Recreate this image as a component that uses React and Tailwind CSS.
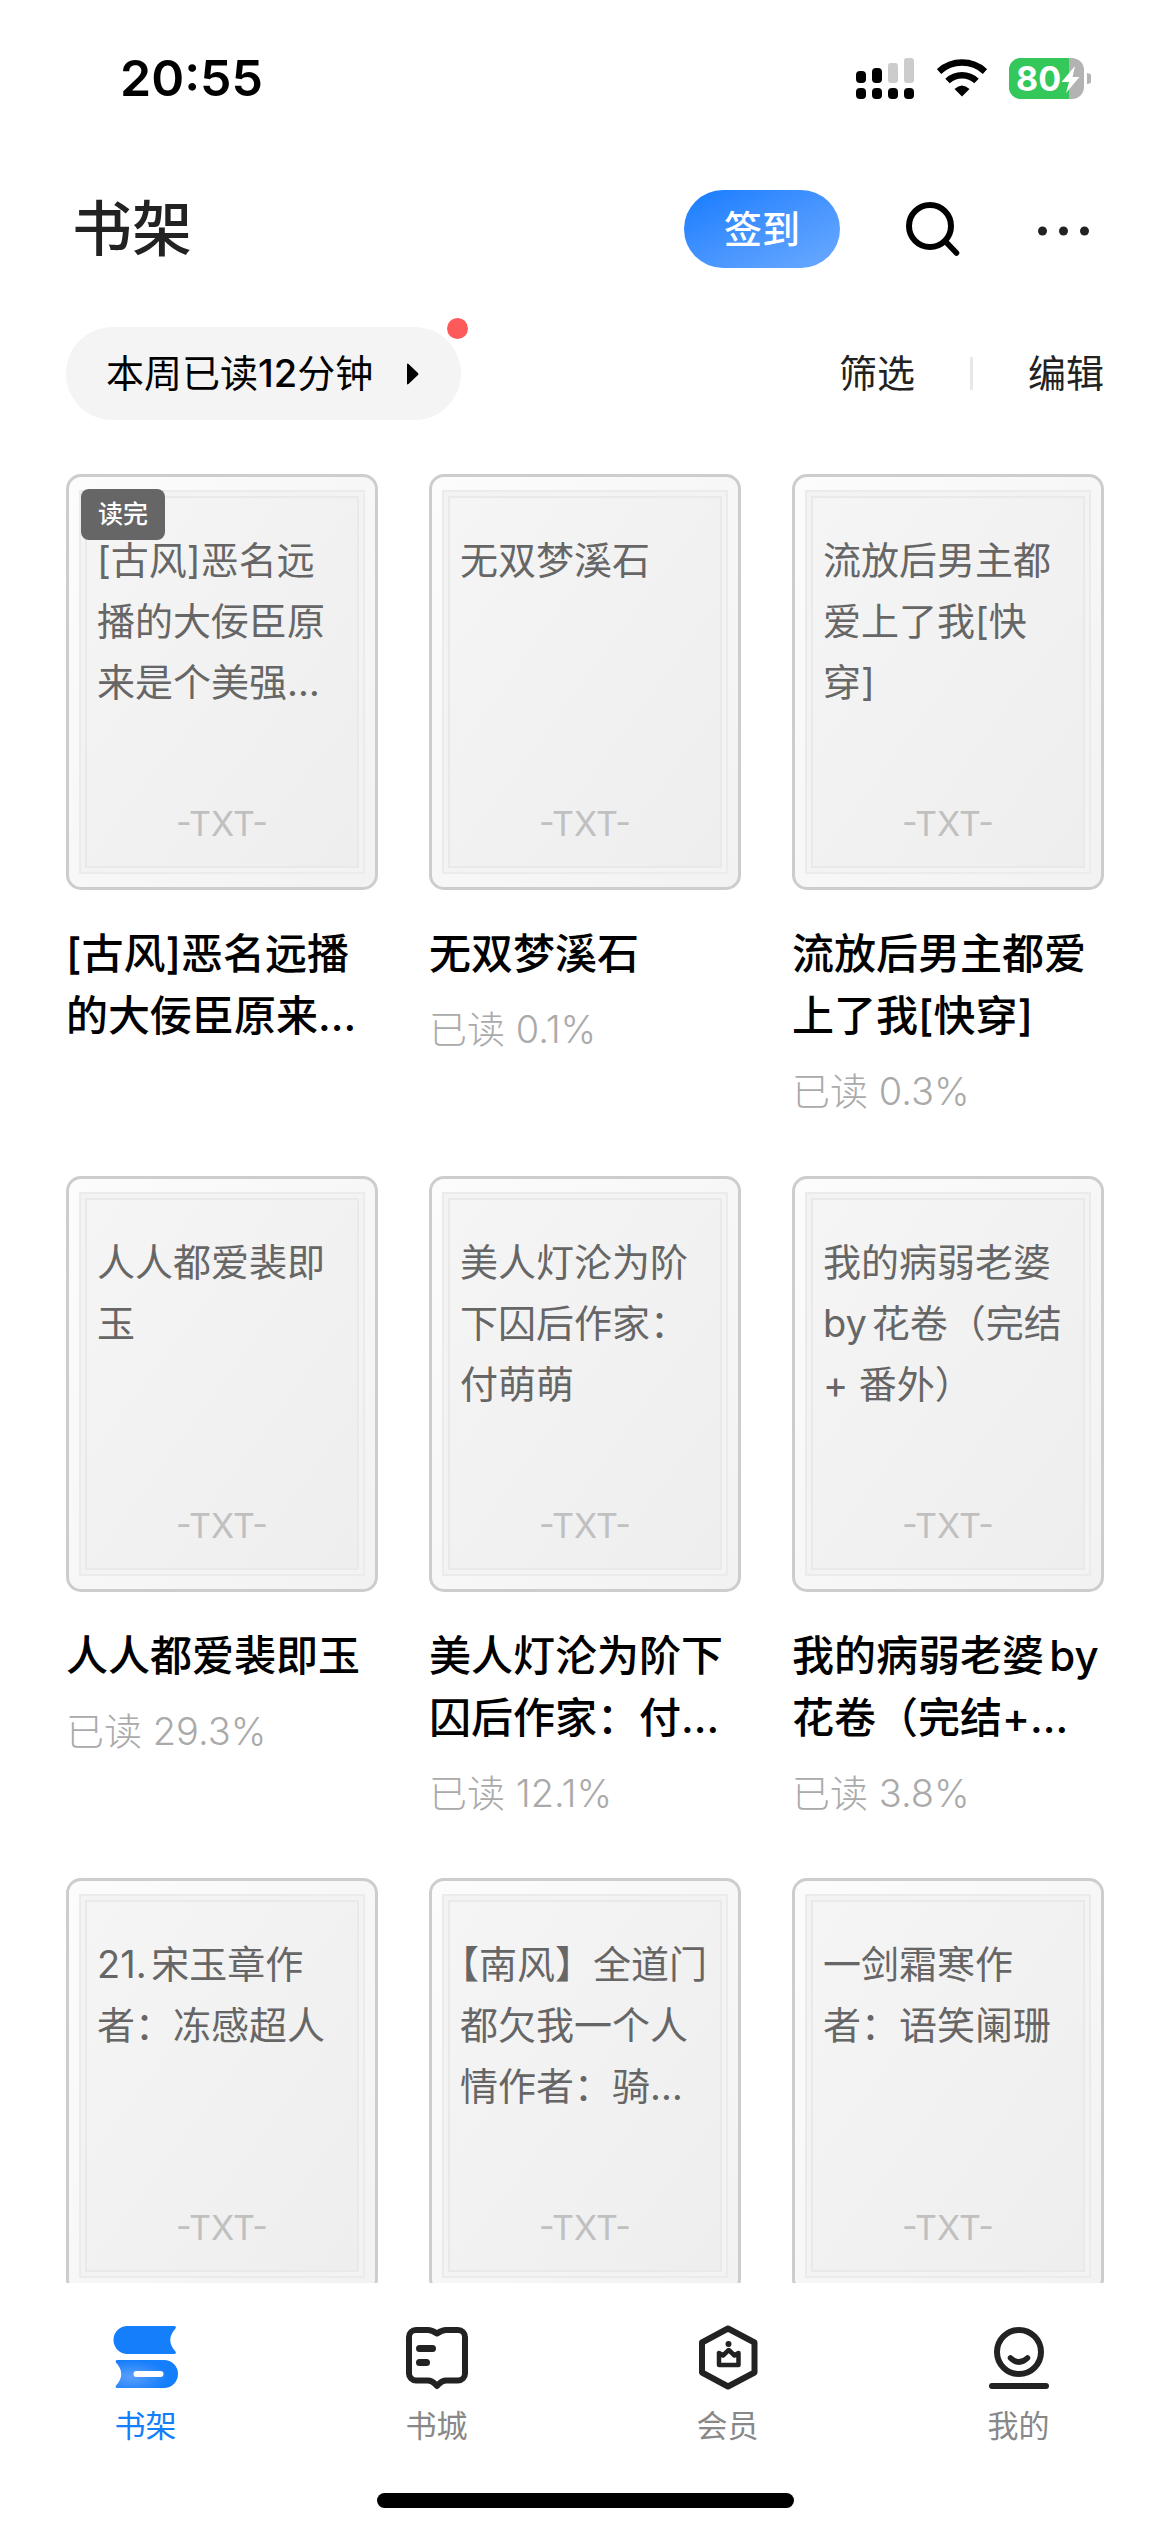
import React, { useState } from 'react';

const BOOKS = [
  {
    id: 1,
    cover: ['[古风]恶名远', '播的大佞臣原', '来是个美强…'],
    title: ['[古风]恶名远播', '的大佞臣原来…'],
    finished: true,
  },
  { id: 2, cover: ['无双梦溪石'], title: ['无双梦溪石'], progress: '0.1%' },
  {
    id: 3,
    cover: ['流放后男主都', '爱上了我[快', '穿]'],
    title: ['流放后男主都爱', '上了我[快穿]'],
    progress: '0.3%',
  },
  { id: 4, cover: ['人人都爱裴即', '玉'], title: ['人人都爱裴即玉'], progress: '29.3%' },
  {
    id: 5,
    cover: ['美人灯沦为阶', '下囚后作家：', '付萌萌'],
    title: ['美人灯沦为阶下', '囚后作家：付…'],
    progress: '12.1%',
  },
  {
    id: 6,
    cover: ['我的病弱老婆', 'by花卷（完结', '+ 番外）'],
    title: ['我的病弱老婆by', '花卷（完结+…'],
    progress: '3.8%',
  },
  { id: 7, cover: ['21.宋玉章作', '者：冻感超人'] },
  { id: 8, cover: ['【南风】全道门', '都欠我一个人', '情作者：骑…'] },
  { id: 9, cover: ['一剑霜寒作', '者：语笑阑珊'] },
];

const SignalIcon = () => (
  <svg className="w-[58px] h-[41px]" viewBox="0 0 58 41" aria-hidden="true">
    <rect x="0" y="13" width="10" height="12" rx="4" />
    <rect x="16" y="10" width="10" height="15" rx="4" />
    <rect x="32" y="5" width="10" height="20" rx="3" fill="#ccc" />
    <rect x="48" y="0" width="10" height="25" rx="3" fill="#ccc" />
    {[0, 16, 32, 48].map(x => (
      <rect key={x} x={x} y="30" width="10" height="11" rx="4" />
    ))}
  </svg>
);

const WifiIcon = () => (
  <svg className="w-[50px] h-[38px]" viewBox="0 0 50 38" aria-hidden="true">
    <path d="M2 12.5A34 34 0 0 1 48 12.5" fill="none" stroke="#000" strokeWidth="6.5" />
    <path d="M10.5 22A21 21 0 0 1 39.5 22" fill="none" stroke="#000" strokeWidth="6.5" />
    <path d="M17.5 30Q25 23 32.5 30L25 37.5Z" />
  </svg>
);

const BatteryIcon = () => (
  <svg className="w-[82px] h-[41px]" viewBox="0 0 82 41" aria-label="80%">
    <defs>
      <clipPath id="battery">
        <rect width="75" height="41" rx="12" />
      </clipPath>
    </defs>
    <g clipPath="url(#battery)">
      <rect width="75" height="41" fill="#b3b3b3" />
      <rect width="60" height="41" fill="#34c759" />
    </g>
    <path d="M78 15a5.500 5.500 0 0 1 0 11z" fill="#b3b3b3" />
    <text x="7" y="33" fill="#fff" className="font-bold text-[34px]">80</text>
    <path d="M66 8L52.500 24H60L57 35L70.500 19H63.500Z" fill="#fff" />
  </svg>
);

const SearchIcon = () => (
  <svg className="w-[54px] h-[56px]" viewBox="0 0 54 56" fill="none" stroke="#000" strokeWidth="6" aria-hidden="true">
    <circle cx="24" cy="25" r="21" />
    <path d="M40 41L50.500 52" strokeWidth="5.500" strokeLinecap="round" />
  </svg>
);

const MoreIcon = () => (
  <svg className="w-[51px] h-[56px]" viewBox="0 0 51 56" fill="#222" aria-hidden="true">
    <circle cx="4.500" cy="30" r="4.500" />
    <circle cx="25.500" cy="30" r="4.500" />
    <circle cx="46.500" cy="30" r="4.500" />
  </svg>
);

const ShelfIcon = () => (
  <svg className="w-[66px] h-[66px]" viewBox="-0.500 -1 66 66" aria-hidden="true">
    <defs>
      <radialGradient id="shelf" cx="0.25" cy="0.6" r="0.6">
        <stop offset="0" stopColor="#5b9ffc" />
        <stop offset="1" stopColor="#157efb" />
      </radialGradient>
    </defs>
    <path d="M14 0H61a1.500 1.500 0 0 1 1 2.500Q51.500 14 62 25.500A1.500 1.500 0 0 1 61 28H14A14 14 0 0 1 14 0Z" fill="#157efb" />
    <path d="M50.500 34A14 14 0 0 1 50.500 62H3.500a1.500 1.500 0 0 1-1-2.500Q13 48 2.500 36.500A1.500 1.500 0 0 1 3.500 34Z" fill="url(#shelf)" />
    <rect x="20" y="45" width="30" height="6" rx="3" fill="#fff" />
  </svg>
);

const StoreIcon = () => (
  <svg className="w-[66px] h-[66px]" viewBox="-2 -2 66 66" fill="none" stroke="#222" strokeWidth="6" strokeLinejoin="round" strokeLinecap="round" aria-hidden="true">
    <path d="M10 3H22C26 3 28 4.500 31 6.500C34 4.500 36 3 40 3H52a7 7 0 0 1 7 7V46.500a7 7 0 0 1-7 7H40C35 53.500 34 56 31 59C28 56 27 53.500 22 53.500H10a7 7 0 0 1-7-7V10a7 7 0 0 1 7-7Z" />
    <path d="M13.500 21.500H26.500M13.500 35.500H20.500" strokeWidth="7" />
  </svg>
);

const VipIcon = () => (
  <svg className="w-[66px] h-[66px]" viewBox="-4 0 66 66" fill="none" stroke="#222" strokeWidth="6" strokeLinejoin="round" aria-hidden="true">
    <path d="M29 3.500L55.500 17.500V47.500L29 61.500L3 47.500V17.500Z" />
    <path d="M20 28V40H39.500V28L35.500 30.500L29.750 25L24 30.500Z" strokeWidth="4.500" />
    <circle cx="29.500" cy="19" r="3" fill="#222" stroke="none" />
  </svg>
);

const MineIcon = () => (
  <svg className="w-[66px] h-[66px]" viewBox="-3 -2 66 66" fill="none" stroke="#222" strokeWidth="6" strokeLinecap="round" aria-hidden="true">
    <circle cx="30" cy="25" r="22" />
    <path d="M21.500 31Q30 39 38.500 31" strokeWidth="5.500" />
    <path d="M3 59H57" />
  </svg>
);

const TABS = [
  { id: 'shelf', label: '书架', Icon: ShelfIcon },
  { id: 'store', label: '书城', Icon: StoreIcon },
  { id: 'vip', label: '会员', Icon: VipIcon },
  { id: 'mine', label: '我的', Icon: MineIcon },
];

const Lines = ({ lines }) =>
  lines.map(line => (
    <span key={line} className="block whitespace-nowrap [text-autospace:normal] [text-spacing-trim:trim-start]">
      {line}
    </span>
  ));

const BookCover = ({ lines, finished }) => (
  <div className="relative aspect-[3/4] rounded-[15px] border-3 border-[#cdcdcd] bg-linear-to-br from-[#fcfcfc] to-[#f2f2f2] px-[10px] py-[13px]">
    <div className="h-full border-2 border-[#ebebeb] bg-[#f3f3f3] p-1">
      <div className="flex h-full flex-col justify-between border-2 border-[#e9e9e9] bg-linear-to-br from-[#f5f5f5] to-[#eeeeee] pt-8 pb-[18px] pl-[10px]">
        <p className="text-[38px] leading-[61px] text-[#666]">
          <Lines lines={lines} />
        </p>
        <p className="pr-[10px] text-center text-[34px] leading-[48px] text-[#c0c0c0]">-TXT-</p>
      </div>
    </div>
    {finished && (
      <span className="absolute top-3 left-3 rounded-lg bg-[#666] px-[17px] text-[25px] leading-[51px] font-medium text-white">
        读完
      </span>
    )}
  </div>
);

const Book = ({ book }) => (
  <article>
    <BookCover lines={book.cover} finished={book.finished} />
    {book.title && (
      <h2 className="mt-[33px] text-[42px] leading-[62px] font-medium text-black">
        <Lines lines={book.title} />
      </h2>
    )}
    {book.progress && (
      <p className="mt-[22px] text-[38px] leading-[44px] font-light text-[#aaa]">已读 {book.progress}</p>
    )}
  </article>
);

export default function App() {
  const [tab, setTab] = useState('shelf');

  return (
    <div className="flex h-screen flex-col bg-white font-['Inter','Noto_Sans_CJK_SC',sans-serif] text-[#222]" lang="zh-CN">
      {/* Status bar */}
      <div className="flex h-[156px] shrink-0 items-center justify-between pr-[79px] pl-[120px] text-black">
        <span className="text-[50px] font-semibold">20:55</span>
        <div className="flex items-center">
          <SignalIcon />
          <span className="ml-[23px]"><WifiIcon /></span>
          <span className="ml-[22px]"><BatteryIcon /></span>
        </div>
      </div>

      {/* Header */}
      <header className="flex h-[146px] shrink-0 items-center pr-[81px] pl-[72px]">
        <h1 className="text-[60px] font-medium">书架</h1>
        <button className="ml-auto h-[78px] rounded-full bg-linear-to-br from-[#0f7bff] to-[#6aaaff] px-10 text-[38px] font-medium text-white">
          签到
        </button>
        <button className="ml-[66px]" aria-label="搜索"><SearchIcon /></button>
        <button className="ml-[78px]" aria-label="更多"><MoreIcon /></button>
      </header>

      {/* Reading time and filters */}
      <div className="mt-[25px] flex shrink-0 items-center justify-between px-[66px]">
        <button className="relative flex h-[93px] items-center rounded-full bg-[#f4f4f4] pr-[42px] pl-10 text-[38px] text-black">
          <span>本周已读<span className="font-medium">12</span>分钟</span>
          <svg className="ml-[34px] w-3 h-[22px]" viewBox="0 0 12 22" aria-hidden="true">
            <path d="M0 1.500Q0 0 1.500 1L11 10Q12 11 11 12L1.500 21Q0 22 0 20.500Z" />
          </svg>
          <span className="absolute -top-[9px] -right-[7px] size-[21px] rounded-full bg-[#ff5a5a]" />
        </button>
        <div className="flex items-center text-[38px]">
          <button>筛选</button>
          <span className="mx-[55px] h-[33px] w-[3px] bg-[#e8e8e8]" />
          <button>编辑</button>
        </div>
      </div>

      {/* Books */}
      <main className="min-h-0 flex-1 overflow-hidden pt-[54px]">
        <div className="grid grid-cols-3 gap-x-[51px] gap-y-[63px] px-[66px]">
          {BOOKS.map(book => (
            <Book key={book.id} book={book} />
          ))}
        </div>
      </main>

      {/* Tab bar */}
      <nav className="shrink-0 bg-white pt-[42px] pb-6">
        <div className="grid grid-cols-4 pr-[6px]">
          {TABS.map(({ id, label, Icon }) => (
            <button
              key={id}
              onClick={() => setTab(id)}
              className={`flex flex-col items-center text-[31px] leading-[40px] ${
                tab === id ? 'text-[#157efb]' : 'text-[#888]'
              }`}
            >
              <Icon />
              <span className="mt-[15px]">{label}</span>
            </button>
          ))}
        </div>
        <div className="mx-auto mt-[47px] h-[15px] w-[417px] rounded-full bg-black" />
      </nav>
    </div>
  );
}
